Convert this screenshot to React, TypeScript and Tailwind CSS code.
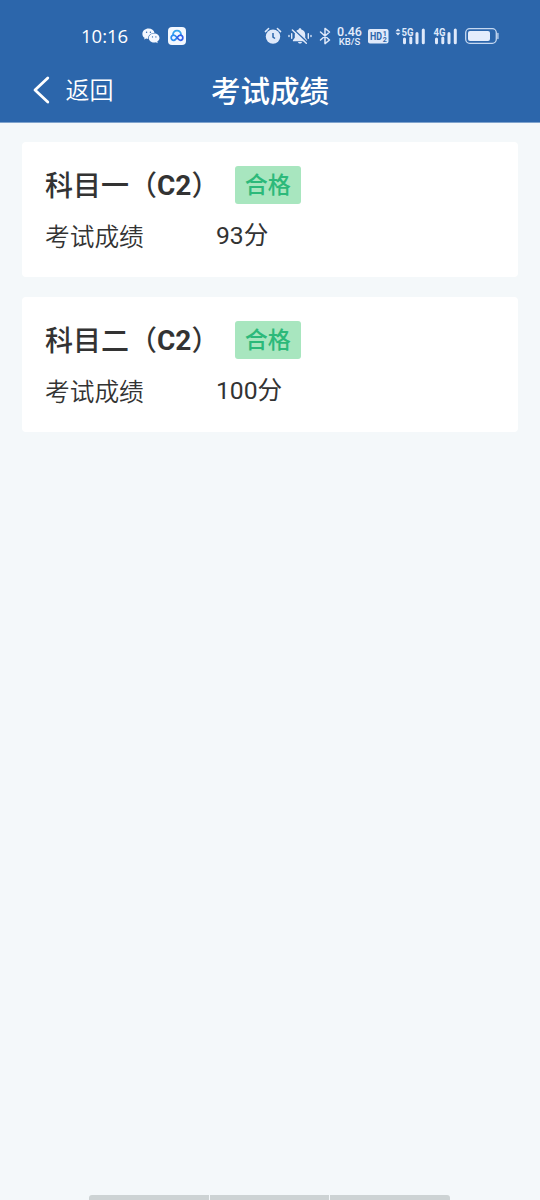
const results = [
  { subject: "科目一", licence: "C2", score: "93分", status: "合格" },
  { subject: "科目二", licence: "C2", score: "100分", status: "合格" },
];

function WeChatIcon() {
  return (
    <svg width="18" height="16" viewBox="0 0 18 16" className="ml-[14px] shrink-0">
      <path
        fill="#f4f8ff"
        d="M6.600.6C3.100.6.400 2.900.4 5.900c0 1.600.8 3 2.200 3.900l-.5 1.800 2.100-1c.7.2 1.300.3 2 .3C5.900 7.400 8.500 4.900 12.500 4.900 12 2.400 9.600.6 6.600.6z"
      />
      <path
        fill="#f4f8ff"
        d="M12.200 5.500c-3.100 0-5.400 2.100-5.400 4.600s2.300 4.500 5.400 4.500c.6 0 1.200-.1 1.700-.3l1.800 1-.4-1.700c1.300-.8 2.200-2.100 2.200-3.500 0-2.500-2.200-4.600-5.300-4.600z"
      />
      <circle cx="4.600" cy="4.300" r=".7" fill="#2c66ab" />
      <circle cx="8.400" cy="4.300" r=".7" fill="#2c66ab" />
      <circle cx="10.500" cy="8.900" r=".65" fill="#2c66ab" />
      <circle cx="13.900" cy="8.900" r=".65" fill="#2c66ab" />
    </svg>
  );
}

function CloudIcon() {
  return (
    <svg width="18" height="18" viewBox="0 0 18 18" className="ml-[8px] shrink-0">
      <rect width="18" height="18" rx="4" fill="#f3f8ff" />
      <g fill="none" strokeWidth="1.700" strokeLinecap="round" strokeLinejoin="round">
        <path d="M5 8.200C4.700 5.400 6.600 3.700 9 3.700s4.300 1.700 4 4.500" stroke="#35a5ee" />
        <path d="M9 10.900C7.800 12.400 7 13.300 5.700 13.300a2.500 2.500 0 0 1 0-5.100c1.400 0 2.200.9 3.300 2.300" stroke="#2b8df0" />
        <path d="M9 10.500c1.200 1.700 2 2.800 3.300 2.800a2.500 2.500 0 0 0 0-5.100c-1.400 0-2.100.9-3.300 2.500" stroke="#315fe8" />
      </g>
    </svg>
  );
}

function AlarmIcon() {
  return (
    <svg width="18" height="18" viewBox="0 0 18 18" className="shrink-0">
      <circle cx="9" cy="9.600" r="7.200" fill="#dfe9fa" />
      <path
        d="M1.400 4.600 4.600 1.500M16.600 4.600l-3.200-3.100"
        stroke="#dfe9fa"
        strokeWidth="1.500"
        strokeLinecap="round"
      />
      <path d="M9 6v4l2 1.500" fill="none" stroke="#2c66ab" strokeWidth="1.500" />
    </svg>
  );
}

function MutedBellIcon() {
  return (
    <svg width="24" height="18" viewBox="0 0 24 18" className="ml-[6px] shrink-0">
      <path
        fill="#dfe9fa"
        d="M12 1.200c.8 0 1.300.5 1.300 1.200 2.500.6 3.900 2.500 3.900 5v3.400l1.900 2.500v.9H4.900v-.9l1.900-2.500V7.400c0-2.500 1.400-4.400 3.900-5 0-.7.500-1.200 1.300-1.200zM10 15h4c-.3 1-1 1.600-2 1.600S10.300 16 10 15z"
      />
      <path d="M5.400 2.200 19.300 15.400" stroke="#2c66ab" strokeWidth="1.500" />
      <path d="M4.400 3 18.300 16.200" stroke="#dfe9fa" strokeWidth="1.500" strokeLinecap="round" />
      <path
        d="M3.700 6.800v4.400M20.300 6.800v4.400M1 8.400v1.200M23 8.400v1.200"
        stroke="#dfe9fa"
        strokeWidth="1.400"
        strokeLinecap="round"
      />
    </svg>
  );
}

function BluetoothIcon() {
  return (
    <svg width="12" height="18" viewBox="0 0 12 18" className="ml-[7px] shrink-0">
      <path
        d="m1.500 5 9 8L6 16.600V1.400L10.500 5l-9 8"
        fill="none"
        stroke="#dfe9fa"
        strokeWidth="1.500"
        strokeLinejoin="round"
        strokeLinecap="round"
      />
    </svg>
  );
}

function HdIcon() {
  return (
    <svg
      width="21"
      height="15"
      viewBox="0 0 21 15"
      className="ml-[5px] shrink-0 font-['Roboto',sans-serif]"
    >
      <rect width="20.500" height="14.500" rx="2" fill="#dfe9fa" />
      <text
        x="2"
        y="11.300"
        fontSize="11"
        fontWeight="700"
        fill="#2c66ab"
        textLength="12"
        lengthAdjust="spacingAndGlyphs"
      >
        HD
      </text>
      <text x="14.800" y="7" fontSize="7" fontWeight="700" fill="#2c66ab">
        1
      </text>
      <text x="14.800" y="13.300" fontSize="7" fontWeight="700" fill="#2c66ab">
        2
      </text>
    </svg>
  );
}

function SignalIcon({ label, arrows }: { label: string; arrows?: boolean }) {
  return (
    <svg
      width="30"
      height="18"
      viewBox="0 0 30 18"
      className="shrink-0 font-['Roboto',sans-serif]"
    >
      {arrows && <path d="M.5 4.200 3 1.400l2.500 2.800zM.5 5.800h5L3 8.600z" fill="#dfe9fa" />}
      <text
        x="6.500"
        y="8.800"
        fontSize="10.500"
        fontWeight="700"
        fill="#dfe9fa"
        textLength="12"
        lengthAdjust="spacingAndGlyphs"
      >
        {label}
      </text>
      <path
        d="M9.500 12v3.800M15.800 11v4.800M22 6.500v9.300M28.300 3v12.800"
        stroke="#dfe9fa"
        strokeWidth="3"
        strokeLinecap="round"
      />
    </svg>
  );
}

function BatteryIcon() {
  return (
    <svg width="34" height="16" viewBox="0 0 34 16" className="ml-[8px] shrink-0">
      <rect x=".7" y=".7" width="30.600" height="14.600" rx="4" fill="none" stroke="#c5d8f1" strokeWidth="1.300" />
      <rect x="3" y="3" width="22" height="10" rx="2" fill="#e4edfc" />
      <path d="M32.900 5.500v5" stroke="#c5d8f1" strokeWidth="1.300" strokeLinecap="round" />
    </svg>
  );
}

function StatusBar() {
  return (
    <div className="flex h-[60px] items-center pt-[12px] pl-[81px]">
      <span className="w-[47px] font-['Open_Sans','Noto_Sans',sans-serif] text-[18.500px] leading-none font-medium whitespace-nowrap">
        10:16
      </span>
      <WeChatIcon />
      <CloudIcon />
      <div className="ml-[78px] flex items-center">
        <AlarmIcon />
        <MutedBellIcon />
        <BluetoothIcon />
        <div className="ml-[5px] flex w-[27px] flex-col items-center font-['Roboto',sans-serif] font-medium text-[#e4edfc]">
          <span className="text-[12.500px] leading-[10px]">0.46</span>
          <span className="text-[9.500px] leading-[9px]">KB/S</span>
        </div>
        <HdIcon />
        <div className="ml-[6px] flex gap-[2px]">
          <SignalIcon label="5G" arrows />
          <SignalIcon label="4G" />
        </div>
        <BatteryIcon />
      </div>
    </div>
  );
}

function NavBar() {
  return (
    <div className="grid h-[62px] grid-cols-[1fr_auto_1fr] items-center">
      <button type="button" className="flex items-center pl-[32px]">
        <svg width="18" height="28" viewBox="0 0 18 28" className="mb-[2px]">
          <path
            d="M15.800 2 3 14l12.800 12"
            fill="none"
            stroke="white"
            strokeWidth="2.800"
            strokeLinecap="round"
            strokeLinejoin="round"
          />
        </svg>
        <span className="ml-[15.500px] text-[24px] leading-none font-[350]">返回</span>
      </button>
      <h1 className="pt-[3px] text-[29.500px] leading-none font-medium">考试成绩</h1>
    </div>
  );
}

function ResultCard({ subject, licence, score, status }: (typeof results)[number]) {
  return (
    <section className="h-[135px] rounded-[4px] bg-white px-[23px] pt-[24px]">
      <div className="flex h-[38px] items-center">
        <h2 className="w-[189.500px] pt-[3px] text-[28px] leading-none font-medium whitespace-nowrap">
          {subject}（<span className="align-[1px] leading-[0] font-bold">{licence}</span>）
        </h2>
        <span className="flex h-[38px] w-[66.500px] items-center justify-center rounded-[3px] bg-[#a8e6bf] text-[23px] leading-none font-medium text-[#2cb97a]">
          {status}
        </span>
      </div>
      <div className="mt-[14px] flex h-[36px] items-center pt-[1px] text-[24.700px] leading-none">
        <span className="w-[171px] pt-[3px] font-[350]">考试成绩</span>
        <span>{score}</span>
      </div>
    </section>
  );
}

export default function App() {
  return (
    <div className="flex h-[1200px] w-[540px] flex-col overflow-hidden bg-[#f4f8fa] font-['Roboto','Noto_Sans_CJK_SC',sans-serif] text-[#333333]">
      <header className="h-[123px] shrink-0 border-b border-[#7fa3cd] bg-[#2c66ab] text-white">
        <StatusBar />
        <NavBar />
      </header>
      <main className="flex flex-1 flex-col gap-[20px] px-[22px] pt-[19px]">
        {results.map((result) => (
          <ResultCard key={result.subject} {...result} />
        ))}
      </main>
      <div className="mr-[90px] ml-[89px] flex h-[5px] shrink-0 gap-px overflow-hidden rounded-t-[3px]">
        <div className="flex-1 bg-[#cdd3d4]" />
        <div className="flex-1 bg-[#cdd3d4]" />
        <div className="flex-1 bg-[#cdd3d4]" />
      </div>
    </div>
  );
}
